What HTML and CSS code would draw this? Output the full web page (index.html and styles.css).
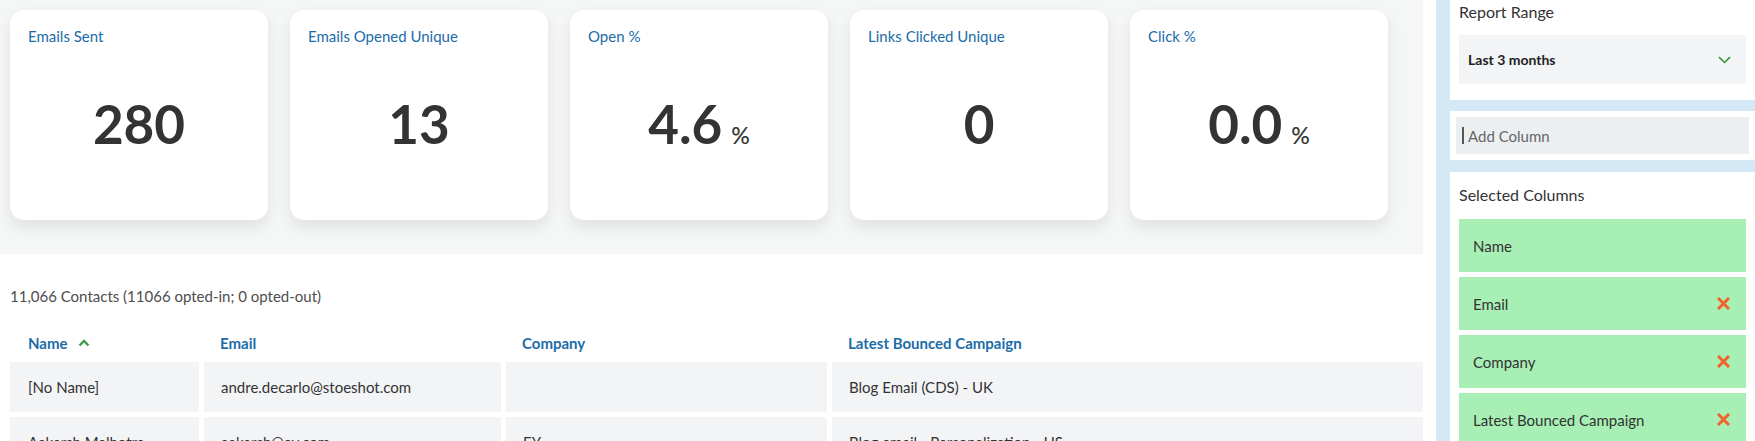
FILE: index.html
```html
<!DOCTYPE html>
<html>
<head>
<meta charset="utf-8">
<link rel="stylesheet" href="styles.css">
</head>
<body>
<div class="page">
  <main class="main">
    <section class="stats">
      <div class="card">
        <div class="card-title">Emails Sent</div>
        <div class="card-value"><span class="num">280</span></div>
      </div>
      <div class="card">
        <div class="card-title">Emails Opened Unique</div>
        <div class="card-value"><span class="num">13</span></div>
      </div>
      <div class="card">
        <div class="card-title">Open %</div>
        <div class="card-value"><span class="num">4.6</span><span class="pct">%</span></div>
      </div>
      <div class="card">
        <div class="card-title">Links Clicked Unique</div>
        <div class="card-value"><span class="num">0</span></div>
      </div>
      <div class="card">
        <div class="card-title">Click %</div>
        <div class="card-value"><span class="num">0.0</span><span class="pct">%</span></div>
      </div>
    </section>

    <section class="contacts">
      <div class="summary">11,066 Contacts (11066 opted-in; 0 opted-out)</div>
      <div class="thead">
        <div class="th">Name
          <svg class="sort" width="12" height="8" viewBox="0 0 12 8"><path d="M1.5 6.5 L6 2 L10.5 6.5" fill="none" stroke="#3f9a4c" stroke-width="2.4"/></svg>
        </div>
        <div class="th">Email</div>
        <div class="th">Company</div>
        <div class="th">Latest Bounced Campaign</div>
      </div>
      <div class="tbody">
        <div class="td">[No Name]</div>
        <div class="td">andre.decarlo@stoeshot.com</div>
        <div class="td"></div>
        <div class="td">Blog Email (CDS) - UK</div>
        <div class="td">Aakarsh Malhotra</div>
        <div class="td">aakarsh@ey.com</div>
        <div class="td">EY</div>
        <div class="td">Blog email - Personalization - US</div>
      </div>
    </section>
  </main>

  <aside class="sidebar">
    <div class="panel panel-range">
      <div class="label">Report Range</div>
      <div class="select">
        <span>Last 3 months</span>
        <svg width="13" height="8" viewBox="0 0 13 8"><path d="M1 1.2 L6.5 6.5 L12 1.2" fill="none" stroke="#35963f" stroke-width="1.6"/></svg>
      </div>
    </div>
    <div class="panel panel-add">
      <div class="input"><span class="caret"></span><span class="placeholder">Add Column</span></div>
    </div>
    <div class="panel panel-cols">
      <div class="label">Selected Columns</div>
      <div class="col-list">
        <div class="col-item"><span>Name</span></div>
        <div class="col-item"><span>Email</span><svg class="x" width="13" height="13" viewBox="0 0 13 13"><path d="M2 2 L11 11 M11 2 L2 11" stroke="#f2622a" stroke-width="3" stroke-linecap="square"/></svg></div>
        <div class="col-item"><span>Company</span><svg class="x" width="13" height="13" viewBox="0 0 13 13"><path d="M2 2 L11 11 M11 2 L2 11" stroke="#f2622a" stroke-width="3" stroke-linecap="square"/></svg></div>
        <div class="col-item"><span>Latest Bounced Campaign</span><svg class="x" width="13" height="13" viewBox="0 0 13 13"><path d="M2 2 L11 11 M11 2 L2 11" stroke="#f2622a" stroke-width="3" stroke-linecap="square"/></svg></div>
      </div>
    </div>
  </aside>
</div>
</body>
</html>
```

FILE: styles.css
```css
* { box-sizing: border-box; }
html, body {
  margin: 0;
  padding: 0;
  background: #ffffff;
  font-family: Lato, "Open Sans", "Liberation Sans", sans-serif;
  color: #333333;
  overflow: hidden;
}
.page {
  display: flex;
  width: 1755px;
  height: 441px;
  overflow: hidden;
}
.main {
  width: 1423px;
  flex: none;
}
.stats {
  background: #f5f6f6;
  height: 254px;
  padding: 10px 0 0 10px;
  display: flex;
  gap: 22px;
}
.card {
  width: 258px;
  height: 210px;
  background: #ffffff;
  border-radius: 14px;
  box-shadow: 0 7px 16px rgba(0, 0, 0, 0.09);
  padding: 16px 18px 0 18px;
}
.card-title {
  font-size: 15px;
  line-height: 20px;
  color: #1b6ca8;
}
.card-value {
  margin-top: 52px;
  display: flex;
  justify-content: center;
  align-items: baseline;
  gap: 9px;
  color: #333333;
}
.num {
  font-size: 53px;
  line-height: 52px;
  font-weight: 700;
}
.pct {
  font-size: 23px;
  font-weight: 500;
}
.contacts {
  padding: 32px 0 0 10px;
}
.summary {
  font-size: 15px;
  line-height: 20px;
  color: #4d4d4d;
}
.thead, .tbody {
  display: grid;
  grid-template-columns: 189px 297px 321px 591px;
  column-gap: 5px;
}
.thead {
  margin-top: 18px;
  height: 38px;
}
.th {
  display: flex;
  align-items: center;
  gap: 10px;
  padding-left: 16px;
  font-size: 15px;
  font-weight: 700;
  color: #1b6ca8;
}
.th:first-child { padding-left: 18px; }
.tbody {
  row-gap: 5px;
  grid-auto-rows: 50px;
}
.td {
  background: #f3f4f6;
  display: flex;
  align-items: center;
  padding-left: 17px;
  font-size: 15px;
  color: #333333;
}
.td:nth-child(4n+1) { padding-left: 18px; }
.sidebar {
  flex: 1;
  margin-left: 13px;
  background: #d4e8f5;
  padding-left: 14px;
  display: flex;
  flex-direction: column;
  overflow: hidden;
}
.panel {
  background: #ffffff;
  flex-shrink: 0;
}
.panel-range {
  height: 100px;
  padding: 2px 9px 0 9px;
}
.label {
  font-size: 16px;
  line-height: 20px;
  color: #333333;
}
.select {
  margin-top: 13px;
  height: 49px;
  background: #f3f4f6;
  display: flex;
  align-items: center;
  justify-content: space-between;
  padding: 0 15px 0 9px;
  font-size: 14px;
  font-weight: 700;
  color: #222222;
}
.panel-add {
  margin-top: 11px;
  height: 49px;
  padding: 6px;
}
.input {
  height: 37px;
  background: #eceff2;
  display: flex;
  align-items: center;
  padding-left: 6px;
}
.caret {
  width: 2px;
  height: 17px;
  background: #555555;
  margin-right: 4px;
}
.placeholder {
  font-size: 15px;
  color: #666666;
}
.panel-cols {
  margin-top: 12px;
  flex: 1 0 auto;
  padding: 13px 9px 0 9px;
}
.col-list {
  margin-top: 14px;
  display: flex;
  flex-direction: column;
  gap: 5px;
}
.col-item {
  height: 53px;
  flex: none;
  background: #a8efb5;
  display: flex;
  align-items: center;
  justify-content: space-between;
  padding: 0 16px 0 14px;
  font-size: 15px;
  color: #333333;
}
```
